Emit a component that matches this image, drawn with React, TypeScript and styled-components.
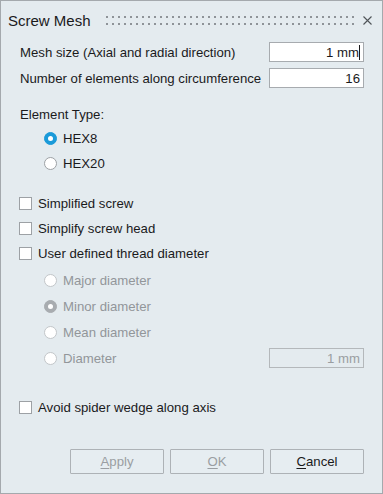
import styled, { createGlobalStyle } from 'styled-components';

const GlobalStyle = createGlobalStyle`
  html, body {
    margin: 0;
    padding: 0;
    background: #e4ebef;
  }
  * {
    box-sizing: border-box;
  }
`;

const Dialog = styled.div`
  width: 383px;
  height: 494px;
  border: 1px solid #a4a9ad;
  background: #e4ebef;
  font-family: "Liberation Sans", Arial, sans-serif;
  font-size: 13.2px;
  color: #1a1a1c;
  display: flex;
  flex-direction: column;
`;

const Header = styled.header`
  height: 38px;
  display: flex;
  align-items: center;
  padding: 0 10px 0 7px;
`;

const Title = styled.h1`
  margin: 0;
  font-size: 15px;
  font-weight: 400;
  color: #1a1a1c;
`;

const Grip = styled.svg`
  margin-left: 15px;
  margin-top: 1px;
`;

const Close = styled.svg`
  margin-left: auto;
`;

const Body = styled.div`
  display: flex;
  flex-direction: column;
  padding: 0 18px 0 18px;
`;

const FieldRow = styled.div`
  height: 26px;
  display: flex;
  align-items: center;
  justify-content: space-between;
  padding-left: 1px;
`;

const TextBox = styled.div<{ disabled?: boolean }>`
  width: 95px;
  height: 20px;
  border: 1px solid ${({ disabled }) => (disabled ? '#b4b8bb' : '#a7abaf')};
  background: ${({ disabled }) => (disabled ? 'transparent' : '#ffffff')};
  color: ${({ disabled }) => (disabled ? '#9a9ea1' : '#1a1a1c')};
  display: flex;
  align-items: center;
  justify-content: flex-end;
  padding-right: 3px;
`;

const Caret = styled.span`
  width: 1px;
  height: 15px;
  background: #1a1a1c;
`;

const Section = styled.div<{ $top: number }>`
  display: flex;
  flex-direction: column;
  margin-top: ${({ $top }) => $top}px;
`;

const GroupLabel = styled.div`
  height: 24px;
  display: flex;
  align-items: center;
  padding-left: 1px;
`;

const OptionRow = styled.label<{ $indent?: number; $height?: number; disabled?: boolean }>`
  height: ${({ $height }) => $height ?? 25}px;
  display: flex;
  align-items: center;
  padding-left: ${({ $indent }) => $indent ?? 0}px;
  color: ${({ disabled }) => (disabled ? '#92969a' : '#1a1a1c')};
`;

const RadioDot = styled.span<{ checked?: boolean; disabled?: boolean }>`
  width: 13px;
  height: 13px;
  border-radius: 50%;
  flex: none;
  margin-right: 6px;
  background: ${({ checked, disabled }) =>
    checked ? (disabled ? '#a8acb0' : '#1a9ad9') : '#ffffff'};
  border: 1px solid
    ${({ checked, disabled }) =>
      checked ? (disabled ? '#a8acb0' : '#1a9ad9') : disabled ? '#c2c6c9' : '#9da1a5'};
  display: flex;
  align-items: center;
  justify-content: center;

  &::after {
    content: '';
    width: 5px;
    height: 5px;
    border-radius: 50%;
    background: #ffffff;
    display: ${({ checked }) => (checked ? 'block' : 'none')};
  }
`;

const CheckBox = styled.span`
  width: 13px;
  height: 13px;
  flex: none;
  border: 1px solid #9da1a5;
  background: #ffffff;
  margin-right: 6px;
`;

const RadioRow = styled.div`
  display: flex;
  align-items: center;
  justify-content: space-between;
  height: 26px;
`;

const Buttons = styled.div`
  display: flex;
  justify-content: flex-end;
  gap: 6px;
  margin-top: 29px;
`;

const Button = styled.button<{ disabled?: boolean }>`
  width: 94px;
  height: 25px;
  border: 1px solid #adb2b6;
  border-radius: 1px;
  background: #e6edf1;
  font-family: inherit;
  font-size: 13.2px;
  color: ${({ disabled }) => (disabled ? '#9a9ea2' : '#1a1a1c')};
  padding: 0;

  u {
    text-decoration: underline;
    text-underline-offset: 2px;
  }
`;

const subOptions = [
  { label: 'Major diameter', checked: false },
  { label: 'Minor diameter', checked: true },
  { label: 'Mean diameter', checked: false },
];

function App(): JSX.Element {
  return (
    <>
      <GlobalStyle />
      <Dialog>
        <Header>
          <Title>Screw Mesh</Title>
          <Grip width="248" height="9" viewBox="0 0 248 9">
            <defs>
              <pattern id="dots" width="6" height="7" patternUnits="userSpaceOnUse">
                <rect x="0" y="0" width="2" height="2" fill="#8e9398" />
              </pattern>
            </defs>
            <rect x="0" y="0" width="248" height="9" fill="url(#dots)" />
          </Grip>
          <Close width="9" height="9" viewBox="0 0 9 9">
            <path d="M0.5 0.5 L8.5 8.5 M8.5 0.5 L0.5 8.5" stroke="#505458" strokeWidth="1.1" />
          </Close>
        </Header>

        <Body>
          <FieldRow>
            <span>Mesh size (Axial and radial direction)</span>
            <TextBox>
              1 mm<Caret />
            </TextBox>
          </FieldRow>
          <FieldRow>
            <span>Number of elements along circumference</span>
            <TextBox>16</TextBox>
          </FieldRow>

          <Section $top={11}>
            <GroupLabel>Element Type:</GroupLabel>
            <OptionRow $indent={25}>
              <RadioDot checked />
              HEX8
            </OptionRow>
            <OptionRow $indent={25}>
              <RadioDot />
              HEX20
            </OptionRow>
          </Section>

          <Section $top={15}>
            <OptionRow>
              <CheckBox />
              Simplified screw
            </OptionRow>
            <OptionRow>
              <CheckBox />
              Simplify screw head
            </OptionRow>
            <OptionRow>
              <CheckBox />
              User defined thread diameter
            </OptionRow>
          </Section>

          <Section $top={1}>
            {subOptions.map((o) => (
              <OptionRow key={o.label} $indent={25} $height={26} disabled>
                <RadioDot checked={o.checked} disabled />
                {o.label}
              </OptionRow>
            ))}
            <RadioRow>
              <OptionRow $indent={25} $height={26} disabled>
                <RadioDot disabled />
                Diameter
              </OptionRow>
              <TextBox disabled>1 mm</TextBox>
            </RadioRow>
          </Section>

          <Section $top={23}>
            <OptionRow $height={26}>
              <CheckBox />
              Avoid spider wedge along axis
            </OptionRow>
          </Section>

          <Buttons>
            <Button disabled>
              <u>A</u>pply
            </Button>
            <Button disabled>
              <u>O</u>K
            </Button>
            <Button>
              <u>C</u>ancel
            </Button>
          </Buttons>
        </Body>
      </Dialog>
    </>
  );
}

export default App;
